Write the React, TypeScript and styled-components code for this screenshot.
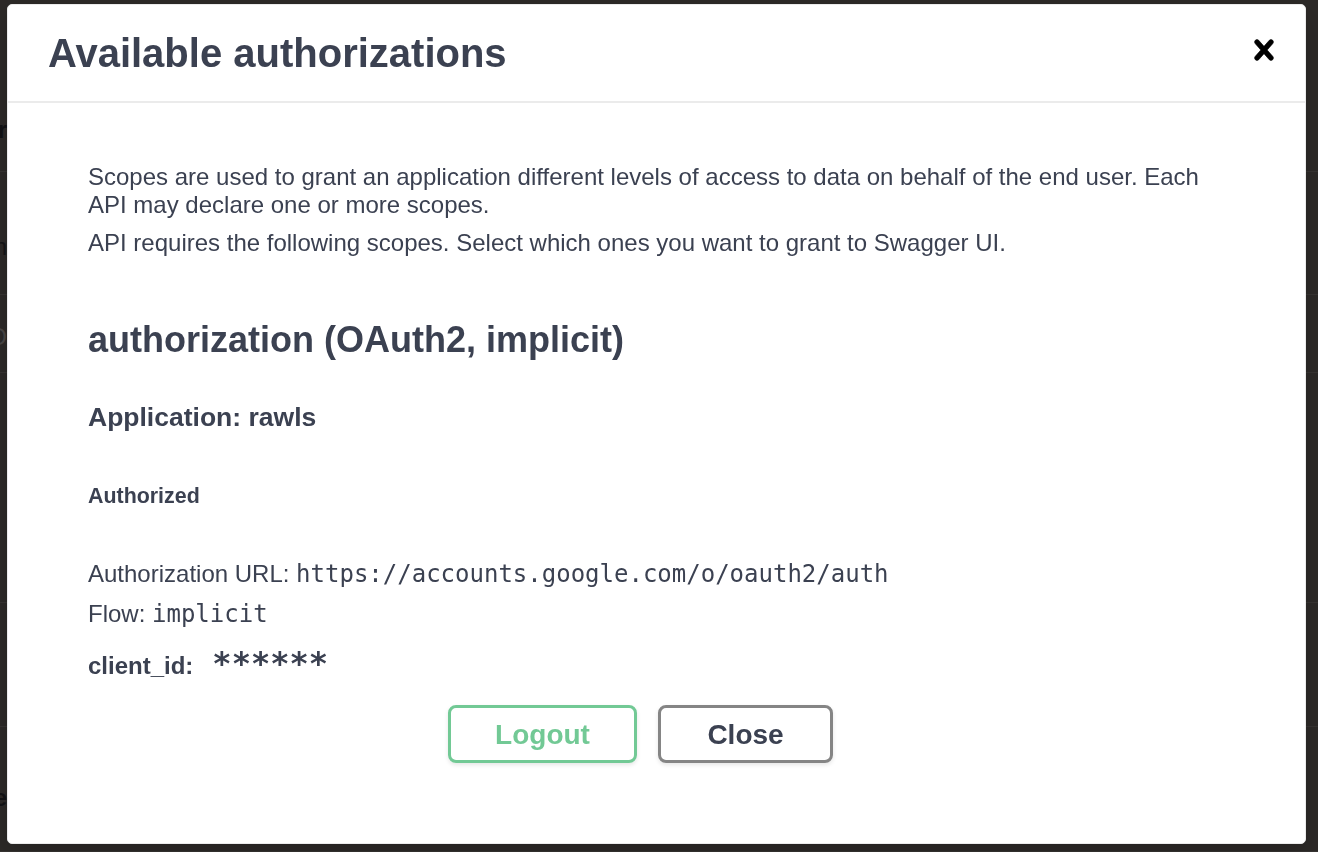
import styled, { createGlobalStyle } from 'styled-components';

const GlobalStyle = createGlobalStyle`
  html, body {
    margin: 0;
    padding: 0;
    background: #2d2a28;
  }

  body {
    font-family: "Liberation Sans", Arial, sans-serif;
    overflow: hidden;
  }
`;

// the swagger page that sits under the dark overlay
const Page = styled.div`
  width: 1318px;
  height: 852px;
  background: #2d2a28;
  display: flex;
  flex-direction: column;
`;

const PageRow = styled.div<{ $height: number; $textTop: number }>`
  height: ${(p) => p.$height}px;
  box-sizing: border-box;
  border-bottom: 1px solid #383533;
  padding-top: ${(p) => p.$textTop}px;
`;

const PageClip = styled.div<{ $tone: string; $bold?: boolean }>`
  width: 7px;
  overflow: hidden;
  display: flex;
  justify-content: flex-end;
  white-space: nowrap;
  font-size: 24px;
  line-height: 28px;
  font-weight: ${(p) => (p.$bold ? 700 : 400)};
  color: ${(p) => p.$tone};
`;

const Overlay = styled.div`
  position: fixed;
  inset: 0;
  padding: 4px 0 0 7px;
`;

const Modal = styled.div`
  width: 1299px;
  box-sizing: border-box;
  background: #fff;
  border: 1px solid #ebebeb;
  border-radius: 5px;
  box-shadow: 0 10px 30px 0 rgba(0, 0, 0, 0.2);
  color: #3b4151;
`;

const Header = styled.div`
  display: flex;
  align-items: center;
  padding: 24px 0;
  border-bottom: 2px solid #ebebeb;
`;

const Title = styled.h3`
  flex: 1;
  margin: 0;
  padding: 0 40px;
  font-size: 40px;
  line-height: 48px;
  font-weight: 700;
  color: #3b4151;
`;

const CloseIconButton = styled.button`
  display: flex;
  background: none;
  border: none;
  padding: 0 21px 0 20px;
  margin-bottom: 7px;
  cursor: pointer;
`;

const Content = styled.div`
  padding: 40px;
`;

const AuthContainer = styled.div`
  padding: 20px 40px;
`;

const ScopeDef = styled.div`
  padding-bottom: 32px;
`;

const Para = styled.p<{ $mb?: number }>`
  margin: 0 0 ${(p) => p.$mb ?? 0}px;
  font-size: 24px;
  line-height: 28px;
  color: #3b4151;
`;

const SchemeTitle = styled.h4`
  margin: 30px 0 0;
  font-size: 36px;
  line-height: 42px;
  font-weight: 700;
`;

const AppName = styled.h5`
  margin: 41px 0 0;
  font-size: 26.5px;
  line-height: 30px;
  font-weight: 700;
`;

const AuthorizedLabel = styled.h6`
  margin: 52px 0 52px;
  font-size: 21.4px;
  line-height: 24px;
  font-weight: 700;
`;

const Code = styled.code<{ $size?: number; $bold?: boolean }>`
  font-family: "DejaVu Sans Mono", "Liberation Mono", monospace;
  font-size: ${(p) => p.$size ?? 24}px;
  font-weight: ${(p) => (p.$bold ? 700 : 400)};
  line-height: 28px;
  color: #3b4151;
`;

const ClientLabel = styled.label`
  font-weight: 700;
  margin-right: 19px;
`;

const ButtonRow = styled.div`
  display: flex;
  justify-content: center;
  gap: 21px;
  padding: 25px 0 20px;
`;

const Button = styled.button<{ $variant: 'logout' | 'done' }>`
  box-sizing: border-box;
  width: ${(p) => (p.$variant === 'logout' ? 189 : 175)}px;
  height: 58px;
  margin-right: ${(p) => (p.$variant === 'done' ? 32 : 0)}px;
  padding: 1px 0 0;
  background: transparent;
  border: 3px solid ${(p) => (p.$variant === 'logout' ? '#72c995' : '#858585')};
  border-radius: 8px;
  box-shadow: 0 2px 4px rgba(0, 0, 0, 0.1);
  font-family: "Liberation Sans", Arial, sans-serif;
  font-size: 28px;
  line-height: 32px;
  font-weight: 700;
  color: ${(p) => (p.$variant === 'logout' ? '#72c995' : '#3b4151')};
  cursor: pointer;
`;

const CloseIcon = () => (
  <svg width="40" height="40" viewBox="0 0 20 20" aria-hidden="true">
    <path
      fill="#000"
      stroke="#000"
      strokeWidth="0.3"
      d="M14.348 14.849c-.469.469-1.229.469-1.697 0L10 11.819l-2.651 3.029c-.469.469-1.229.469-1.697 0-.469-.469-.469-1.229 0-1.697l2.758-3.15-2.759-3.152c-.469-.469-.469-1.228 0-1.697.469-.469 1.228-.469 1.697 0L10 8.183l2.651-3.031c.469-.469 1.228-.469 1.697 0 .469.469.469 1.229 0 1.697l-2.758 3.152 2.758 3.15c.469.469.469 1.229 0 1.698z"
    />
  </svg>
);

const pageRows = [
  { height: 172, textTop: 116, text: 'Server', tone: '#121214', bold: true },
  { height: 123, textTop: 61, text: 'Authorization', tone: '#151517' },
  { height: 78, textTop: 28, text: 'GO', tone: '#4a4847' },
  { height: 230, textTop: 0, text: '', tone: '#000' },
  { height: 124, textTop: 0, text: '', tone: '#000' },
  { height: 125, textTop: 57, text: 'Schemae', tone: '#131315', bold: true },
];

const App = () => {
  return (
    <>
      <GlobalStyle />
      <Page>
        {pageRows.map((row, i) => (
          <PageRow key={i} $height={row.height} $textTop={row.textTop}>
            <PageClip $tone={row.tone} $bold={row.bold}>
              {row.text}
            </PageClip>
          </PageRow>
        ))}
      </Page>
      <Overlay>
        <Modal>
          <Header>
            <Title>Available authorizations</Title>
            <CloseIconButton aria-label="Close modal">
              <CloseIcon />
            </CloseIconButton>
          </Header>
          <Content>
            <AuthContainer>
              <ScopeDef>
                <Para $mb={10}>
                  Scopes are used to grant an application different levels of
                  access to data on behalf of the end user. Each API may declare
                  one or more scopes.
                </Para>
                <Para>
                  API requires the following scopes. Select which ones you want
                  to grant to Swagger UI.
                </Para>
              </ScopeDef>
              <SchemeTitle>authorization (OAuth2, implicit)</SchemeTitle>
              <AppName>Application: rawls</AppName>
              <AuthorizedLabel>Authorized</AuthorizedLabel>
              <Para $mb={12}>
                Authorization URL:{' '}
                <Code>https://accounts.google.com/o/oauth2/auth</Code>
              </Para>
              <Para $mb={21}>
                Flow: <Code>implicit</Code>
              </Para>
              <Para>
                <ClientLabel>client_id:</ClientLabel>
                <Code $size={32} $bold>
                  ******
                </Code>
              </Para>
              <ButtonRow>
                <Button $variant="logout">Logout</Button>
                <Button $variant="done">Close</Button>
              </ButtonRow>
            </AuthContainer>
          </Content>
        </Modal>
      </Overlay>
    </>
  );
};

export default App;
